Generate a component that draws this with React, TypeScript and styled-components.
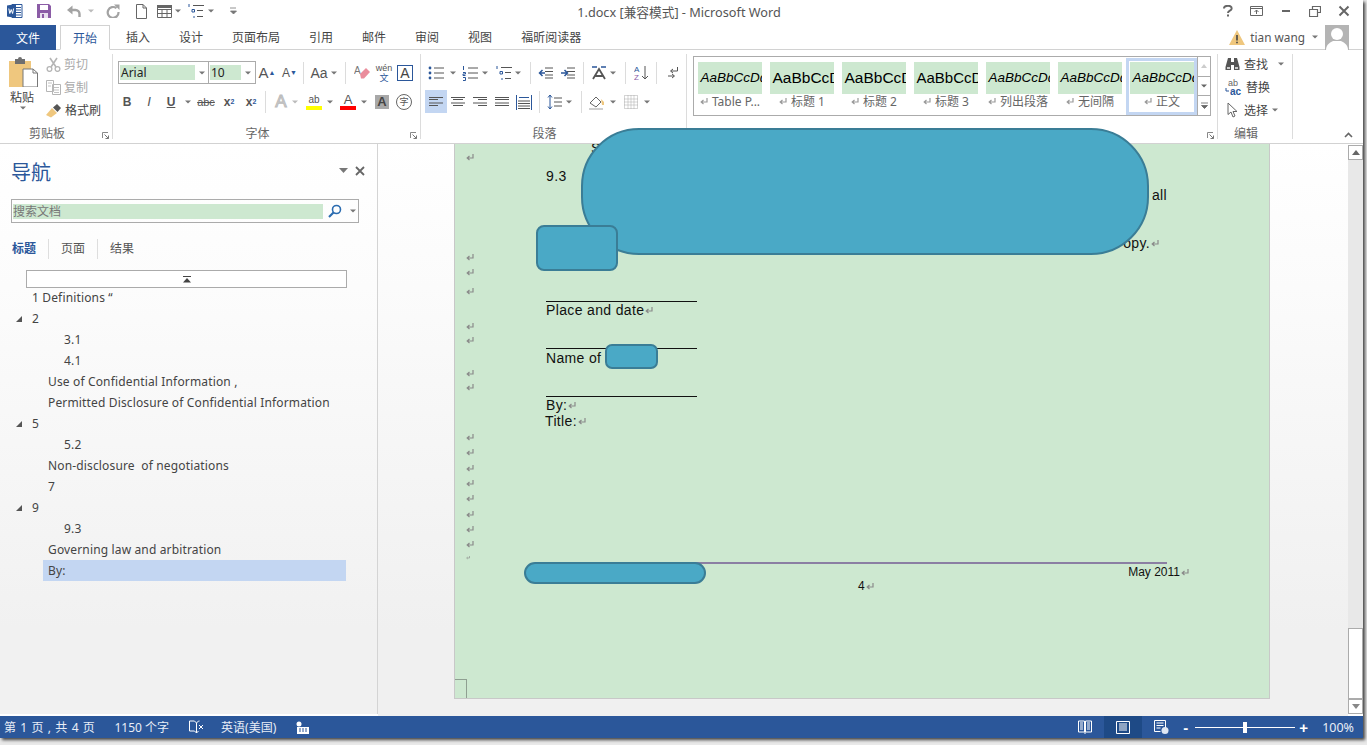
import React from 'react';
import styled, { createGlobalStyle } from 'styled-components';

const CJK = `"Noto Sans", "Noto Sans CJK SC", sans-serif`;

const GlobalStyle = createGlobalStyle`
  html, body {
    margin: 0;
    padding: 0;
    width: 1367px;
    height: 745px;
    overflow: hidden;
    background: #e9e9e9;
    font-family: ${CJK};
  }
`;

const Window = styled.div`
  position: relative;
  width: 1363px;
  height: 738px;
  display: flex;
  flex-direction: column;
  background: #fff;
  box-shadow: 2px 2px 3px #444;
  overflow: hidden;
`;

/* title bar */
const TitleBar = styled.header`
  height: 25px;
  box-sizing: border-box;
  padding-bottom: 3px;
  display: grid;
  grid-template-columns: 1fr auto 1fr;
  align-items: center;
`;

const Qat = styled.div`
  display: flex;
  align-items: center;
`;

const Slot = styled.span<{ $w: number }>`
  width: ${(p) => p.$w}px;
  flex: none;
  display: flex;
  align-items: center;
  justify-content: center;
`;

const Title = styled.div`
  font-size: 12.7px;
  color: #555;
  padding-right: 5px;
`;

const WindowButtons = styled.div`
  display: flex;
  justify-content: flex-end;
  align-items: center;
  padding-right: 4.5px;
`;

/* tabs */
const TabRow = styled.nav`
  height: 25px;
  box-sizing: border-box;
  display: flex;
  align-items: stretch;
  border-bottom: 1px solid #d2d2d2;
  font-size: 12px;
`;

const FileTab = styled.div`
  width: 56px;
  background: #2b579a;
  color: #fff;
  display: flex;
  align-items: center;
  justify-content: center;
  margin-right: 4px;
  margin-bottom: -1px;
`;

const Tab = styled.div<{ $active?: boolean }>`
  display: flex;
  align-items: center;
  padding: 0 14.5px;
  color: ${(p) => (p.$active ? '#2b579a' : '#444')};
  box-sizing: border-box;
  ${(p) =>
    p.$active &&
    `
    border: 1px solid #d2d2d2;
    border-bottom: 1px solid #fff;
    margin: 0 1.5px -1px 0;
    padding: 0 12px;
  `}
`;

const UserBox = styled.div`
  margin-left: auto;
  display: flex;
  align-items: center;
  font-size: 11.8px;
  color: #555;
  padding-right: 14px;
`;

const Avatar = styled.div`
  width: 24px;
  height: 25px;
  background: #b4b4b4;
  overflow: hidden;
`;

/* ribbon */
const Ribbon = styled.section`
  height: 94px;
  box-sizing: border-box;
  display: flex;
  border-bottom: 1px solid #d2d2d2;
  padding-top: 4px;
`;

const Group = styled.div<{ $w: number }>`
  position: relative;
  width: ${(p) => p.$w}px;
  flex: none;
  box-sizing: border-box;
  height: 85px;
  border-right: 1px solid #dcdcdc;
  display: flex;
  flex-direction: column;
`;

const GroupBody = styled.div`
  flex: 1;
  min-height: 0;
`;

const GroupLabel = styled.div`
  height: 14px;
  line-height: 14px;
  margin-bottom: -2px;
  padding-right: 18px;
  text-align: center;
  font-size: 12px;
  color: #666;
`;

const Launcher = styled.span`
  position: absolute;
  right: 3px;
  bottom: 0;
  display: flex;
`;

const ClipboardBody = styled(GroupBody)`
  display: flex;
`;

const PasteColumn = styled.div`
  width: 46px;
  display: flex;
  flex-direction: column;
  align-items: center;
  padding-top: 3px;
  font-size: 12px;
  color: #444;
  box-sizing: border-box;
`;

const PasteLabel = styled.div`
  margin-top: 2px;
  margin-left: -2px;
  line-height: 17px;
`;

const ClipColumn = styled.div`
  display: flex;
  flex-direction: column;
  gap: 5px;
  padding-top: 1px;
`;

const ClipRow = styled.div<{ $off?: boolean }>`
  display: flex;
  align-items: center;
  gap: 3px;
  height: 18px;
  font-size: 12px;
  color: ${(p) => (p.$off ? '#aaa' : '#444')};
`;

const ToolRows = styled(GroupBody)`
  display: flex;
  flex-direction: column;
  gap: 6px;
  padding-top: 7px;
  box-sizing: border-box;
`;

const ToolRow = styled.div<{ $pad: number }>`
  display: flex;
  align-items: center;
  height: 23px;
  padding-left: ${(p) => p.$pad}px;
`;

const Tool = styled.span<{ $w: number; $active?: boolean; $color?: string }>`
  width: ${(p) => p.$w}px;
  height: 23px;
  flex: none;
  display: flex;
  align-items: center;
  justify-content: center;
  background: ${(p) => (p.$active ? '#c3d6f2' : 'transparent')};
  color: ${(p) => p.$color || '#555'};
  font-size: 13px;
  font-family: 'Liberation Sans', sans-serif;
`;

const Divider = styled.span`
  width: 1px;
  height: 22px;
  background: #dcdcdc;
  flex: none;
`;

const Combo = styled.div<{ $w: number }>`
  width: ${(p) => p.$w}px;
  height: 23px;
  box-sizing: border-box;
  border: 1px solid #ababab;
  margin-right: -1px;
  display: flex;
  align-items: center;
  padding-left: 1px;
  flex: none;
`;

const ComboValue = styled.span<{ $w: number }>`
  width: ${(p) => p.$w}px;
  height: 15px;
  background: #cde8d0;
  font-size: 12px;
  line-height: 15px;
  color: #222;
  padding-left: 1px;
  box-sizing: border-box;
`;

const ComboArrow = styled.span`
  flex: 1;
  display: flex;
  justify-content: center;
`;

const GrowGlyph = styled(Tool)<{ $size: number }>`
  font-size: ${(p) => p.$size}px;
  & sup {
    font-size: 7px;
    color: #2b579a;
  }
`;

const BoxedLetter = styled.span`
  border: 1px solid #2b579a;
  width: 14px;
  height: 14px;
  font-size: 14px;
  display: flex;
  justify-content: center;
  align-items: center;
  color: #444;
`;

const PhoneticGlyph = styled(Tool)`
  font-size: 9px;
  flex-direction: column;
  line-height: 9px;
  & span {
    color: #2b579a;
    font-family: ${CJK};
  }
`;

const BoldGlyph = styled(Tool)<{ $underline?: boolean }>`
  font-weight: 700;
  font-size: 12px;
  text-decoration: ${(p) => (p.$underline ? 'underline' : 'none')};
  & sub,
  & sup {
    font-size: 7px;
    color: #2b579a;
  }
`;

const ItalicGlyph = styled(Tool)`
  font-style: italic;
`;

const StrikeGlyph = styled(Tool)`
  text-decoration: line-through;
  font-size: 11px;
`;

const EffectGlyph = styled(Tool)`
  font-size: 17px;
  -webkit-text-stroke: 1px #bbb;
`;

const ColorBar = styled.span<{ $color: string; $size: number }>`
  display: flex;
  flex-direction: column;
  align-items: center;
  line-height: 12px;
  font-size: ${(p) => p.$size}px;
  &::after {
    content: '';
    width: 16px;
    height: 4px;
    background: ${(p) => p.$color};
  }
`;

const ShadedLetter = styled.span`
  background: #a8a8a8;
  width: 14px;
  height: 14px;
  display: flex;
  justify-content: center;
  align-items: center;
  font-weight: 700;
  font-size: 13px;
  line-height: 14px;
  color: #444;
`;

const CircledLetter = styled.span`
  border: 1px solid #666;
  border-radius: 50%;
  width: 14px;
  height: 14px;
  display: flex;
  justify-content: center;
  align-items: center;
  font-size: 9px;
  font-family: ${CJK};
`;

/* style gallery */
const Gallery = styled.div`
  margin: 2px 0 0 6px;
  width: 518px;
  height: 60px;
  box-sizing: border-box;
  border: 1px solid #ababab;
  display: flex;
  padding-left: 4px;
`;

const StyleCard = styled.div<{ $selected?: boolean }>`
  width: ${(p) => (p.$selected ? '71px' : '64px')};
  height: ${(p) => (p.$selected ? '57px' : '52px')};
  flex: none;
  box-sizing: border-box;
  margin: ${(p) => (p.$selected ? '1px 0 0 -4px' : '5px 8px 0 0')};
  border: ${(p) => (p.$selected ? '3px solid #c3d6f2' : 'none')};
  display: flex;
  flex-direction: column;
  padding: ${(p) => (p.$selected ? '1px 0 0 1px' : '0')};
`;

const StylePreview = styled.div<{ $italic?: boolean; $size?: number }>`
  height: 32px;
  flex: none;
  background: #cde8d0;
  overflow: hidden;
  white-space: nowrap;
  font-family: 'Liberation Sans', sans-serif;
  font-style: ${(p) => (p.$italic ? 'italic' : 'normal')};
  font-size: ${(p) => p.$size ?? 13.5}px;
  line-height: 32px;
  color: #000;
  padding-left: 2.5px;
`;

const StyleName = styled.div`
  height: 15px;
  font-size: 12px;
  line-height: 15px;
  color: #666;
  display: flex;
  justify-content: center;
  align-items: center;
  gap: 4px;
  white-space: nowrap;
`;

const GalleryScroll = styled.div`
  margin-left: auto;
  width: 15px;
  display: flex;
  flex-direction: column;
  border-left: 1px solid #ababab;
`;

const GalleryButton = styled.span<{ $mid?: boolean }>`
  flex: 1;
  display: flex;
  align-items: center;
  justify-content: center;
  border-bottom: ${(p) => (p.$mid ? '1px solid #ababab' : 'none')};
  border-top: ${(p) => (p.$mid ? '1px solid #ababab' : 'none')};
`;

const EditRows = styled(GroupBody)`
  display: flex;
  flex-direction: column;
  gap: 5px;
  padding: 1px 0 0 7px;
`;

const EditRow = styled.div`
  height: 18px;
  display: flex;
  align-items: center;
  gap: 4px;
  font-size: 12px;
  color: #444;
`;

const CollapseButton = styled.span`
  margin-left: 51px;
  height: 84px;
  display: flex;
  align-items: flex-end;
`;

/* main */
const Main = styled.main`
  flex: 1;
  min-height: 0;
  display: flex;
`;

const NavPane = styled.aside`
  width: 378px;
  flex: none;
  box-sizing: border-box;
  border-right: 1px solid #d4d4d4;
  background: linear-gradient(#ffffff, #fcfcfc 25%, #f1f1f1 85%);
  padding: 13px 19px 0 11px;
  margin-bottom: 2px;
`;

const NavHead = styled.div`
  display: flex;
  align-items: center;
  height: 28px;
  font-size: 20px;
  color: #2b579a;
`;

const NavHeadButtons = styled.div`
  margin-left: auto;
  display: flex;
  align-items: center;
  gap: 7px;
  margin-right: -7px;
`;

const SearchBox = styled.div`
  margin-top: 14px;
  height: 24px;
  box-sizing: border-box;
  width: 348px;
  border: 1px solid #ababab;
  display: flex;
  align-items: center;
  padding-left: 1px;
`;

const SearchText = styled.span`
  width: 310px;
  height: 15px;
  background: #cde8d0;
  font-size: 12px;
  line-height: 15px;
  color: #777;
`;

const SearchIcons = styled.span`
  display: flex;
  align-items: center;
  margin-left: 5px;
  gap: 8px;
`;

const NavTabs = styled.div`
  display: flex;
  align-items: center;
  height: 20px;
  margin-top: 16px;
  font-size: 12px;
`;

const NavTab = styled.span<{ $active?: boolean; $first?: boolean }>`
  padding: ${(p) => (p.$first ? '0 12px 0 1px' : '0 12px')};
  height: 20px;
  line-height: 20px;
  box-sizing: border-box;
  color: ${(p) => (p.$active ? '#2b579a' : '#555')};
  font-weight: ${(p) => (p.$active ? 700 : 400)};
  & + & {
    border-left: 1px solid #dedede;
  }
`;

const TreeUp = styled.div`
  margin: 11px 0 0 15px;
  width: 321px;
  height: 18px;
  box-sizing: border-box;
  border: 1px solid #ababab;
  display: flex;
  align-items: center;
  justify-content: center;
  background: #fff;
`;

const Tree = styled.ul`
  list-style: none;
  margin: -1px 0 0 0;
  padding: 0;
`;

const TreeRow = styled.li<{ $indent: number; $selected?: boolean }>`
  position: relative;
  height: 21px;
  line-height: 21px;
  font-size: 12px;
  letter-spacing: 0.15px;
  color: #444;
  white-space: pre;
  margin-left: ${(p) => (p.$selected ? '32px' : '0')};
  width: ${(p) => (p.$selected ? '303px' : 'auto')};
  padding-left: ${(p) => (p.$selected ? 5 : p.$indent - 11)}px;
  background: ${(p) => (p.$selected ? '#c3d6f2' : 'transparent')};
  box-sizing: border-box;
`;

const TreeToggle = styled.span`
  position: absolute;
  left: 5px;
  top: 8px;
  display: flex;
`;

const DocArea = styled.div`
  flex: 1;
  min-width: 0;
  background: linear-gradient(#ffffff, #fbfbfb 25%, #f0f0f0 85%);
  padding: 0 77px 0 76px;
  display: flex;
`;

const Page = styled.article`
  position: relative;
  width: 816px;
  height: 555px;
  flex: none;
  box-sizing: border-box;
  background: #cde8d0;
  border: solid #c8c8c8;
  border-width: 0 1px 1px 1px;
  display: flex;
  overflow: hidden;
  font-family: 'Liberation Sans', sans-serif;
  font-size: 14px;
  letter-spacing: 0.35px;
  color: #111;
`;

const MarkColumn = styled.div`
  width: 91px;
  flex: none;
  padding-left: 11px;
  box-sizing: border-box;
  display: flex;
  flex-direction: column;
`;

const MarkSlot = styled.span<{ $gap: number; $small?: boolean }>`
  height: 10px;
  margin-top: ${(p) => p.$gap}px;
  display: flex;
  transform: ${(p) => (p.$small ? 'scale(0.5)' : 'none')};
  transform-origin: 0 50%;
`;

const BodyColumn = styled.div`
  flex: 1;
  min-width: 0;
  display: flex;
  flex-direction: column;
`;

const TextRow = styled.div<{ $top?: number; $left?: number; $right?: number }>`
  height: 16px;
  line-height: 16px;
  flex: none;
  display: flex;
  align-items: center;
  gap: 1px;
  margin-top: ${(p) => p.$top ?? 0}px;
  margin-left: ${(p) => p.$left ?? 0}px;
  justify-content: ${(p) => (p.$right ? 'flex-end' : 'flex-start')};
  padding-right: ${(p) => p.$right ?? 0}px;
  white-space: nowrap;
`;

const SignLine = styled.div<{ $top: number }>`
  width: 151px;
  height: 1px;
  flex: none;
  background: #111;
  margin-top: ${(p) => p.$top}px;
`;

const FooterLine = styled.div`
  width: 478px;
  height: 2px;
  flex: none;
  margin: 133px 0 0 143px;
  background: #8b7fa3;
`;

const FooterText = styled(TextRow)`
  font-size: 12px;
  letter-spacing: 0;
`;

const PageCorner = styled.span`
  position: absolute;
  left: 0;
  bottom: 0;
  width: 11px;
  height: 18px;
  border: solid #8f9f91;
  border-width: 1px 1px 0 0;
`;

const Scrollbar = styled.div`
  width: 15px;
  flex: none;
  margin-bottom: 2px;
  display: flex;
  flex-direction: column;
  background: #e8e8e8;
  margin-top: 1px;
`;

const ScrollButton = styled.span`
  height: 15px;
  flex: none;
  box-sizing: border-box;
  border: 1px solid #ababab;
  background: #fff;
  display: flex;
  align-items: center;
  justify-content: center;
`;

const ScrollTrack = styled.div`
  flex: 1;
  display: flex;
  flex-direction: column;
  justify-content: flex-end;
`;

const ScrollThumb = styled.div`
  height: 71px;
  box-sizing: border-box;
  border: 1px solid #ababab;
  background: #fff;
`;

/* status */
const StatusBar = styled.footer`
  height: 22px;
  flex: none;
  background: #2b579a;
  color: #e8eef7;
  font-size: 12px;
  display: flex;
  align-items: center;
  padding-left: 4px;
  position: relative;
`;

const StatusItem = styled.span<{ $left?: number; $size?: number; $spacing?: number }>`
  margin-left: ${(p) => p.$left ?? 0}px;
  font-size: ${(p) => p.$size ?? 12}px;
  letter-spacing: ${(p) => p.$spacing ?? 0}px;
  display: flex;
  align-items: center;
  white-space: pre;
`;

const StatusRight = styled.div`
  margin-left: auto;
  display: flex;
  align-items: center;
  height: 22px;
  padding-right: 9px;
`;

const ViewButton = styled.span<{ $active?: boolean }>`
  width: 38px;
  height: 22px;
  display: flex;
  align-items: center;
  justify-content: center;
  background: ${(p) => (p.$active ? '#1e4a86' : 'transparent')};
`;

const ZoomTrack = styled.span`
  position: relative;
  width: 100px;
  height: 1px;
  background: #fff;
  margin: 0 4px 0 5px;
`;

const ZoomThumb = styled.span`
  position: absolute;
  left: 48px;
  top: -5px;
  width: 4px;
  height: 11px;
  background: #fff;
`;

const ZoomSign = styled.span`
  font-family: 'Liberation Sans', sans-serif;
  font-size: 15px;
  font-weight: 700;
  color: #fff;
  width: 9px;
  text-align: center;
  line-height: 15px;
`;

const Redaction = styled.div<{ $x: number; $y: number; $w: number; $h: number; $r: number }>`
  position: absolute;
  left: ${(p) => p.$x}px;
  top: ${(p) => p.$y}px;
  width: ${(p) => p.$w}px;
  height: ${(p) => p.$h}px;
  border-radius: ${(p) => p.$r}px;
  box-sizing: border-box;
  background: #4aa9c6;
  border: 2px solid #3a7d96;
`;

/* small drawings */
const Svg: React.FC<{ w?: number; h?: number; children: React.ReactNode }> = ({ w = 16, h = 16, children }) => (
  <svg width={w} height={h} viewBox={`0 0 ${w} ${h}`} style={{ display: 'block', flex: 'none' }}>
    {children}
  </svg>
);

const Caret: React.FC<{ color?: string }> = ({ color }) => (
  <Svg w={6} h={4}>
    <path d="M0 0.5h6L3 3.5z" fill={color || '#777'} />
  </Svg>
);

const ReturnMark: React.FC<{ color?: string }> = ({ color = '#8a8a8a' }) => (
  <Svg w={8} h={9}>
    <path d="M7 1v4H2M3.5 3L1.2 5l2.3 2" fill="none" stroke={color} strokeWidth="1.2" />
  </Svg>
);

const LinesIcon: React.FC<{ align: 'left' | 'center' | 'right' | 'full' }> = ({ align }) => {
  const short = { left: 'M1 6h9M1 12h9', center: 'M3 6h10M3 12h10', right: 'M6 6h9M6 12h9', full: 'M1 6h14M1 12h14' }[align];
  return (
    <Svg>
      <path d="M1 3.5h14M1 9h14" stroke="#555" fill="none" />
      <path d={short} stroke="#555" fill="none" transform="translate(0 -.5)" />
    </Svg>
  );
};

const ListIcon: React.FC<{ kind: 'bullet' | 'number' | 'multi' }> = ({ kind }) => (
  <Svg>
    {kind === 'bullet' && (
      <>
        <circle cx="2" cy="3" r="1.4" fill="#2b579a" />
        <circle cx="2" cy="8" r="1.4" fill="#2b579a" />
        <circle cx="2" cy="13" r="1.4" fill="#2b579a" />
      </>
    )}
    {kind === 'number' && <path d="M1.5 1v4M1 7.5h2.5v1.5H1v1.5h2.5M1 12.5h2.5v3H1" stroke="#2b579a" fill="none" />}
    {kind === 'multi' && <path d="M1 1v3M4 6.5h2.5v2.5H4zM6 13v2" stroke="#2b579a" fill="none" />}
    {kind === 'multi' ? (
      <path d="M5 2.5h11M9 7.5h6M9 13.5h6" stroke="#555" fill="none" />
    ) : (
      <path d="M6 3h10M6 8h10M6 13h10" stroke="#555" fill="none" />
    )}
  </Svg>
);

const WordLogo = () => (
  <Svg>
    <path d="M5 1.5h10v13H5z" fill="#fff" stroke="#2b579a" />
    <path d="M9 4.5h5M9 7h5M9 9.5h5M9 12h5" stroke="#2b579a" />
    <path d="M0 2.5l9-1.5v14l-9-1.5z" fill="#2b579a" />
    <path d="M1.8 5.5l1 5 1.4-4 1.4 4 1-5" fill="none" stroke="#fff" strokeWidth="1" />
  </Svg>
);

const SaveIcon = () => (
  <Svg w={14} h={14}>
    <path d="M0 0h12l2 2v12H0z" fill="#8b5ca6" />
    <path d="M3 1h8v5H3z" fill="#fff" />
    <path d="M3 9h8v5H3z" fill="#e8e0ee" />
    <path d="M5 10h2v4H5z" fill="#8b5ca6" />
  </Svg>
);

const UndoIcon = () => (
  <Svg w={15} h={14}>
    <path d="M3 6h6.5a4 4 0 0 1 4 4v3" fill="none" stroke="#a3a3a3" strokeWidth="2.4" />
    <path d="M6.5 1.5L1 6l5.5 4.5z" fill="#a3a3a3" />
  </Svg>
);

const RedoIcon = () => (
  <Svg w={14} h={14}>
    <path d="M10.5 4.2A5.4 5.4 0 1 0 12.5 8" fill="none" stroke="#a3a3a3" strokeWidth="2.2" />
    <path d="M8 0.5h5.5V6z" fill="#a3a3a3" />
  </Svg>
);

const NewDocIcon = () => (
  <Svg w={11} h={15}>
    <path d="M.5.5h6.5l3.5 3.5v10.500H.5zM7 .5V4h3.500" fill="#fff" stroke="#666" />
  </Svg>
);

const TableIcon = () => (
  <Svg w={15} h={13}>
    <path d="M.5 .5h14v12H.5zM.5 4.500h14M.5 8.500h14M5 4.500v8M10 4.500v8" fill="none" stroke="#666" />
    <path d="M0 0h15v3H0z" fill="#666" />
  </Svg>
);

const PasteIcon = () => (
  <Svg w={29} h={30}>
    <path d="M0 4h22v26H0z" fill="#efc77e" />
    <path d="M6 2h3a2 2 0 0 1 4 0h3v5H6z" fill="#6f6f6f" />
    <path d="M14 12h10l4.500 4v14H14z" fill="#fff" stroke="#777" />
    <path d="M24 12v4h4.500" fill="none" stroke="#777" />
  </Svg>
);

const ScissorsIcon = () => (
  <Svg w={15} h={15}>
    <circle cx="3.5" cy="12" r="2.4" fill="none" stroke="#b5b5b5" strokeWidth="1.3" />
    <circle cx="11.5" cy="12" r="2.4" fill="none" stroke="#b5b5b5" strokeWidth="1.3" />
    <path d="M5 10L11 1M10 10L4 1" stroke="#b5b5b5" strokeWidth="1.6" />
  </Svg>
);

const CopyIcon = () => (
  <Svg w={15} h={15}>
    <path d="M.5.5h7v11h-7zM6.500 4.500h8v10h-8z" fill="#fff" stroke="#b5b5b5" />
    <path d="M2 3h4M2 6h3M8 7.500h5M8 10h5M8 12.500h5" stroke="#c2c2c2" />
  </Svg>
);

const BrushIcon = () => (
  <Svg w={16} h={15}>
    <path d="M0 12L6 5l5 5-6 4.500z" fill="#efc77e" />
    <path d="M7 4.500l4-3.500 4 4-3.500 4z" fill="#555" />
  </Svg>
);

const BinocularsIcon = () => (
  <Svg w={15} h={14}>
    <path d="M3 1h3v4h3V1h3l2.500 9v3H9V8H6v5H.5v-3z" fill="#555" />
    <path d="M2 10h3v2H2zM10 10h3v2h-3z" fill="#ccc" />
  </Svg>
);

const ReplaceIcon = () => (
  <Svg w={17} h={18}>
    <text x="3" y="8" fontSize="9" fontFamily="Liberation Sans" fill="#666">ab</text>
    <text x="5" y="17" fontSize="10" fontFamily="Liberation Sans" fill="#2b579a" fontWeight="700">ac</text>
    <path d="M1 10v3h3" fill="none" stroke="#2b579a" />
  </Svg>
);

const CursorIcon = () => (
  <Svg w={11} h={16}>
    <path d="M1 1v11.500l3-2.500 2 5 2-1-2-4.500h4z" fill="#fff" stroke="#666" />
  </Svg>
);

const WarnIcon = () => (
  <Svg w={16} h={15}>
    <path d="M8 0l8 15H0z" fill="#efc77e" />
    <path d="M7.200 5h1.600v5.500H7.200zM7.200 11.700h1.600v1.600H7.200z" fill="#444" />
  </Svg>
);

const PersonIcon = () => (
  <Svg w={24} h={25}>
    <circle cx="12" cy="9" r="6" fill="#fff" />
    <path d="M1 25c0-6 5-8 7-9h8c2 1 7 3 7 9z" fill="#fff" />
  </Svg>
);

const SearchGlass = () => (
  <Svg w={14} h={14}>
    <circle cx="8.500" cy="5.500" r="4" fill="none" stroke="#2b6cb0" strokeWidth="1.600" />
    <path d="M5.500 8.500L1 13" stroke="#2b6cb0" strokeWidth="2.200" />
  </Svg>
);

const LauncherIcon = () => (
  <Launcher>
    <Svg w={7} h={7}>
      <path d="M.5 6V.5H6" fill="none" stroke="#888" />
      <path d="M2.500 2.500L6.500 6.500M6.500 3.500v3h-3" fill="none" stroke="#777" />
    </Svg>
  </Launcher>
);

const styleCards = [
  { name: 'Table P...', italic: true },
  { name: '标题 1', size: 15.5 },
  { name: '标题 2', size: 15.5 },
  { name: '标题 3', size: 15 },
  { name: '列出段落', italic: true },
  { name: '无间隔', italic: true },
];

const tree = [
  { t: '1 Definitions “', i: 32 },
  { t: '2', i: 32, open: true },
  { t: '3.1', i: 64 },
  { t: '4.1', i: 64 },
  { t: 'Use of Confidential Information ,', i: 48 },
  { t: 'Permitted Disclosure of Confidential Information', i: 48 },
  { t: '5', i: 32, open: true },
  { t: '5.2', i: 64 },
  { t: 'Non-disclosure  of negotiations', i: 48 },
  { t: '7', i: 48 },
  { t: '9', i: 32, open: true },
  { t: '9.3', i: 64 },
  { t: 'Governing law and arbitration', i: 48 },
  { t: 'By:', i: 48, selected: true },
];

const markGaps = [9, 90, 5, 9, 25, 4, 23, 4, 40, 5, 6, 5, 5, 6, 5, 5, 3];

const App: React.FC = () => (
  <>
    <GlobalStyle />
    <Window>
      <TitleBar>
        <Qat>
          <Slot $w={7} />
          <WordLogo />
          <Slot $w={14} />
          <SaveIcon />
          <Slot $w={15} />
          <UndoIcon />
          <Slot $w={20}><Caret color="#bbb" /></Slot>
          <Slot $w={5} />
          <RedoIcon />
          <Slot $w={16} />
          <NewDocIcon />
          <Slot $w={10} />
          <TableIcon />
          <Slot $w={12}><Caret /></Slot>
          <Slot $w={4} />
          <ListIcon kind="multi" />
          <Slot $w={14}><Caret /></Slot>
          <Slot $w={12} />
          <Svg w={7} h={8}>
            <path d="M0 1h6M.5 4h6l-3 3z" stroke="#777" fill="#777" strokeWidth=".8" />
          </Svg>
        </Qat>
        <Title>1.docx [兼容模式] - Microsoft Word</Title>
        <WindowButtons>
          <Slot $w={29}>
            <Svg w={10} h={12}>
              <path d="M1 3.500C1 1 3 .8 5 .8s4 1 3.500 3.200C8 5.800 5 5.500 5 8M5 9.500V11.500" fill="none" stroke="#666" strokeWidth="2" />
            </Svg>
          </Slot>
          <Slot $w={29}>
            <Svg w={14} h={11}>
              <path d="M.5 .5h12v9H.5zM.5 2.500h12M6.500 8V4M4.500 6l2-2 2 2" fill="none" stroke="#666" />
            </Svg>
          </Slot>
          <Slot $w={29}>
            <Svg w={12} h={4}><path d="M2 1h8v2H2z" fill="#666" /></Svg>
          </Slot>
          <Slot $w={29}>
            <Svg w={12} h={11}>
              <path d="M.5 3.500h8v7h-8zM3.500 3.500v-3h8v6h-3" fill="none" stroke="#666" strokeWidth="1.200" />
            </Svg>
          </Slot>
          <Slot $w={29}>
            <Svg w={12} h={12}>
              <path d="M1.500 1.500l9 9M10.500 1.500l-9 9" stroke="#666" strokeWidth="2" />
            </Svg>
          </Slot>
        </WindowButtons>
      </TitleBar>

      <TabRow>
        <FileTab>文件</FileTab>
        <Tab $active>开始</Tab>
        <Tab>插入</Tab>
        <Tab>设计</Tab>
        <Tab>页面布局</Tab>
        <Tab>引用</Tab>
        <Tab>邮件</Tab>
        <Tab>审阅</Tab>
        <Tab>视图</Tab>
        <Tab>福昕阅读器</Tab>
        <UserBox>
          <WarnIcon />
          <Slot $w={5} />
          tian wang
          <Slot $w={20}><Caret /></Slot>
          <Avatar><PersonIcon /></Avatar>
        </UserBox>
      </TabRow>

      <Ribbon>
        <Group $w={113}>
          <ClipboardBody>
            <PasteColumn>
              <PasteIcon />
              <PasteLabel>粘贴</PasteLabel>
              <Slot $w={12}><Caret /></Slot>
            </PasteColumn>
            <ClipColumn>
              <ClipRow $off><ScissorsIcon />剪切</ClipRow>
              <ClipRow $off><CopyIcon />复制</ClipRow>
              <ClipRow><BrushIcon />格式刷</ClipRow>
            </ClipColumn>
          </ClipboardBody>
          <GroupLabel>剪贴板</GroupLabel>
          <LauncherIcon />
        </Group>

        <Group $w={308}>
          <ToolRows>
            <ToolRow $pad={5}>
              <Combo $w={91}>
                <ComboValue $w={75}>Arial</ComboValue>
                <ComboArrow><Caret /></ComboArrow>
              </Combo>
              <Combo $w={48}>
                <ComboValue $w={31}>10</ComboValue>
                <ComboArrow><Caret /></ComboArrow>
              </Combo>
              <GrowGlyph $w={24} $size={15}>A<sup>▲</sup></GrowGlyph>
              <GrowGlyph $w={21} $size={12}>A<sup>▼</sup></GrowGlyph>
              <Slot $w={3} />
              <Divider />
              <Slot $w={3} />
              <GrowGlyph $w={24} $size={14}>Aa</GrowGlyph>
              <Slot $w={6}><Caret /></Slot>
              <Slot $w={8} />
              <Divider />
              <Slot $w={5} />
              <Tool $w={22}>
                <Svg w={16} h={15}>
                  <text x="0" y="9" fontSize="10" fontFamily="Liberation Sans" fill="#777">A</text>
                  <path d="M6 9l6-6 4 4-6 6.500H7z" fill="#ea8d9c" />
                </Svg>
              </Tool>
              <PhoneticGlyph $w={22}>
                wén
                <span>文</span>
              </PhoneticGlyph>
              <Tool $w={20}><BoxedLetter>A</BoxedLetter></Tool>
            </ToolRow>
            <ToolRow $pad={3}>
              <BoldGlyph $w={22}>B</BoldGlyph>
              <ItalicGlyph $w={22}>I</ItalicGlyph>
              <BoldGlyph $w={22} $underline>U</BoldGlyph>
              <Slot $w={12}><Caret /></Slot>
              <StrikeGlyph $w={24}>abc</StrikeGlyph>
              <BoldGlyph $w={22}>x<sub>2</sub></BoldGlyph>
              <BoldGlyph $w={22}>x<sup>2</sup></BoldGlyph>
              <Slot $w={3} />
              <Divider />
              <Slot $w={3} />
              <EffectGlyph $w={24} $color="#ddd">A</EffectGlyph>
              <Slot $w={4}><Caret color="#bbb" /></Slot>
              <Slot $w={5} />
              <Tool $w={24}>
                <ColorBar $color="#ffff00" $size={10}>ab</ColorBar>
              </Tool>
              <Slot $w={8}><Caret /></Slot>
              <Slot $w={2} />
              <Tool $w={24}>
                <ColorBar $color="#ff0000" $size={13}>A</ColorBar>
              </Tool>
              <Slot $w={8}><Caret /></Slot>
              <Slot $w={4} />
              <Tool $w={20}><ShadedLetter>A</ShadedLetter></Tool>
              <Slot $w={2} />
              <Tool $w={20}><CircledLetter>字</CircledLetter></Tool>
            </ToolRow>
          </ToolRows>
          <GroupLabel>字体</GroupLabel>
          <LauncherIcon />
        </Group>

        <Group $w={266}>
          <ToolRows>
            <ToolRow $pad={5}>
              <Tool $w={20}><ListIcon kind="bullet" /></Tool>
              <Slot $w={14}><Caret /></Slot>
              <Tool $w={20}><ListIcon kind="number" /></Tool>
              <Slot $w={10}><Caret /></Slot>
              <Slot $w={4} />
              <Tool $w={20}><ListIcon kind="multi" /></Tool>
              <Slot $w={8}><Caret /></Slot>
              <Slot $w={8} />
              <Divider />
              <Slot $w={4} />
              <Tool $w={22}>
                <Svg>
                  <path d="M7 3h8M7 6.500h8M7 10h8M7 13h8" stroke="#555" />
                  <path d="M7 8H2M4.500 5L1.500 8l3 3" fill="none" stroke="#2b579a" strokeWidth="1.500" />
                </Svg>
              </Tool>
              <Tool $w={22}>
                <Svg>
                  <path d="M7 3h8M7 6.500h8M7 10h8M7 13h8" stroke="#555" />
                  <path d="M1 8h6M4.500 5l3 3-3 3" fill="none" stroke="#2b579a" strokeWidth="1.500" />
                </Svg>
              </Tool>
              <Slot $w={4} />
              <Divider />
              <Slot $w={4} />
              <Tool $w={22}>
                <Svg w={18} h={15}>
                  <path d="M2 2h5M11 2h5" stroke="#2b579a" strokeWidth="1.500" />
                  <path d="M3 14L9 4l6 10M5.500 11h7" fill="none" stroke="#555" strokeWidth="1.800" />
                </Svg>
              </Tool>
              <Slot $w={6}><Caret /></Slot>
              <Slot $w={9} />
              <Divider />
              <Slot $w={5} />
              <Tool $w={22}>
                <Svg>
                  <text x="0" y="7" fontSize="8" fontFamily="Liberation Sans" fill="#2b579a">A</text>
                  <text x="0" y="15" fontSize="8" fontFamily="Liberation Sans" fill="#8b5ca6">Z</text>
                  <path d="M11 1v13M8 11l3 3 3-3" fill="none" stroke="#555" />
                </Svg>
              </Tool>
              <Slot $w={3} />
              <Divider />
              <Slot $w={5} />
              <Tool $w={22}><Svg w={12} h={14}><path d="M10.500 1v4H4M6 3L3.500 5 6 7M1 10h6M5 8l2.500 2L5 12" fill="none" stroke="#555" /></Svg></Tool>
            </ToolRow>
            <ToolRow $pad={4}>
              <Tool $w={22} $active><LinesIcon align="left" /></Tool>
              <Tool $w={22}><LinesIcon align="center" /></Tool>
              <Tool $w={22}><LinesIcon align="right" /></Tool>
              <Tool $w={22}><LinesIcon align="full" /></Tool>
              <Tool $w={22}>
                <Svg>
                  <path d="M2 7h12M2 9.500h12M2 12h12M2 14.500h12" stroke="#555" />
                  <path d="M.5 1v15M15.500 1v15M3 3.500h10" stroke="#2b579a" />
                </Svg>
              </Tool>
              <Slot $w={4} />
              <Divider />
              <Slot $w={5} />
              <Tool $w={20}>
                <Svg>
                  <path d="M3 1v14M1 3.500L3 1l2 2.500M1 12.500L3 15l2-2.500" fill="none" stroke="#2b579a" />
                  <path d="M7 4h8M7 8h8M7 12h8" stroke="#555" />
                </Svg>
              </Tool>
              <Slot $w={8}><Caret /></Slot>
              <Slot $w={8} />
              <Divider />
              <Slot $w={5} />
              <Tool $w={20}>
                <Svg>
                  <path d="M1 9l6-6 5 5-5 5z" fill="none" stroke="#666" />
                  <path d="M12 5l3 3v3h-2z" fill="#efc77e" />
                  <path d="M0 14h14v2H0z" fill="#cfcfcf" />
                </Svg>
              </Tool>
              <Slot $w={12}><Caret /></Slot>
              <Tool $w={24}><Svg w={14} h={14}><path d="M.5 .5h13v13H.5zM7 .5v13M.5 7h13M.5 4h13M.5 10h13M4 .5v13M10 .5v13" fill="none" stroke="#aaa" strokeDasharray="1 1" /></Svg></Tool>
              <Slot $w={8}><Caret /></Slot>
            </ToolRow>
          </ToolRows>
          <GroupLabel>段落</GroupLabel>
        </Group>

        <Group $w={531}>
          <Gallery>
            {styleCards.map((c) => (
              <StyleCard key={c.name}>
                <StylePreview $italic={c.italic} $size={c.size}>AaBbCcDd</StylePreview>
                <StyleName><ReturnMark color="#999" />{c.name}</StyleName>
              </StyleCard>
            ))}
            <StyleCard $selected>
              <StylePreview $italic>AaBbCcDd</StylePreview>
              <StyleName><ReturnMark color="#999" />正文</StyleName>
            </StyleCard>
            <GalleryScroll>
              <GalleryButton><Svg w={7} h={5}><path d="M0 4h6L3 0z" fill="#ccc" /></Svg></GalleryButton>
              <GalleryButton $mid><Caret color="#666" /></GalleryButton>
              <GalleryButton><Svg w={7} h={7}><path d="M0 1h7M.5 3.500h6L3.500 6.500z" stroke="#666" fill="#666" strokeWidth=".8" /></Svg></GalleryButton>
            </GalleryScroll>
          </Gallery>
          <LauncherIcon />
        </Group>

        <Group $w={75}>
          <EditRows>
            <EditRow><BinocularsIcon />查找<Slot $w={18}><Caret /></Slot></EditRow>
            <EditRow><ReplaceIcon />替换</EditRow>
            <EditRow><Slot $w={15}><CursorIcon /></Slot>选择<Caret /></EditRow>
          </EditRows>
          <GroupLabel>编辑</GroupLabel>
        </Group>

        <CollapseButton>
          <Svg w={9} h={6}><path d="M1 5l3.500-3.500L8 5" fill="none" stroke="#666" strokeWidth="1.600" /></Svg>
        </CollapseButton>
      </Ribbon>

      <Main>
        <NavPane>
          <NavHead>
            导航
            <NavHeadButtons>
              <Svg w={9} h={6}><path d="M0 0h9L4.500 5z" fill="#777" /></Svg>
              <Svg w={10} h={10}><path d="M1 1l8 8M9 1L1 9" stroke="#666" strokeWidth="1.800" /></Svg>
            </NavHeadButtons>
          </NavHead>
          <SearchBox>
            <SearchText>搜索文档</SearchText>
            <SearchIcons>
              <SearchGlass />
              <Caret />
            </SearchIcons>
          </SearchBox>
          <NavTabs>
            <NavTab $active $first>标题</NavTab>
            <NavTab>页面</NavTab>
            <NavTab>结果</NavTab>
          </NavTabs>
          <TreeUp>
            <Svg w={8} h={7}><path d="M0 .5h8" stroke="#444" /><path d="M0 6.500h8L4 2z" fill="#444" /></Svg>
          </TreeUp>
          <Tree>
            {tree.map((r, i) => (
              <TreeRow key={i} $indent={r.i} $selected={r.selected}>
                {r.open && (
                  <TreeToggle>
                    <Svg w={6} h={6}><path d="M6 0v6H0z" fill="#555" /></Svg>
                  </TreeToggle>
                )}
                {r.t}
              </TreeRow>
            ))}
          </Tree>
        </NavPane>

        <DocArea>
          <Page>
            <MarkColumn>
              {markGaps.map((g, i) => (
                <MarkSlot key={i} $gap={g} $small={i === markGaps.length - 1}><ReturnMark /></MarkSlot>
              ))}
            </MarkColumn>
            <BodyColumn>
              <TextRow $top={-4} $left={45}>S</TextRow>
              <TextRow $top={12}>9.3</TextRow>
              <TextRow $top={3} $right={102}>all</TextRow>
              <TextRow $top={32} $right={110}>opy.<ReturnMark /></TextRow>
              <SignLine $top={50} />
              <TextRow>Place and date<ReturnMark /></TextRow>
              <SignLine $top={30} />
              <TextRow $top={1}>Name of</TextRow>
              <SignLine $top={30} />
              <TextRow>By:<ReturnMark /></TextRow>
              <TextRow $left={-1}>Title:<ReturnMark /></TextRow>
              <FooterLine />
              <FooterText $right={80}>May 2011<ReturnMark /></FooterText>
              <FooterText $left={312} $top={-2}>4<ReturnMark /></FooterText>
            </BodyColumn>
            <PageCorner />
          </Page>
        </DocArea>

        <Scrollbar>
          <ScrollButton><Svg w={8} h={5}><path d="M0 5h8L4 0z" fill="#666" /></Svg></ScrollButton>
          <ScrollTrack><ScrollThumb /></ScrollTrack>
          <ScrollButton><Svg w={8} h={5}><path d="M0 0h8L4 5z" fill="#888" /></Svg></ScrollButton>
        </Scrollbar>
      </Main>

      <StatusBar>
        <StatusItem $spacing={0.6}>第 1 页 , 共 4 页</StatusItem>
        <StatusItem $left={19}>1150 个字</StatusItem>
        <StatusItem $left={20}>
          <Svg w={15} h={14}>
            <path d="M.5 1h5l2 2v10l-2-2h-5zM7.500 3l2-2h1M7.500 13l2-2" fill="none" stroke="#fff" />
            <path d="M10 5l4 4M14 5l-4 4" stroke="#fff" />
          </Svg>
        </StatusItem>
        <StatusItem $left={17}>英语(美国)</StatusItem>
        <StatusItem $left={20}>
          <Svg w={14} h={13}>
            <circle cx="3" cy="3" r="2.500" fill="#fff" />
            <path d="M1 6h12v7H1z" fill="#fff" />
            <path d="M3 8h8M3 10h8" stroke="#2b579a" strokeDasharray="2 1" />
          </Svg>
        </StatusItem>
        <StatusRight>
          <ViewButton>
            <Svg w={14} h={14}>
              <path d="M.5 1h6v11h-6zM7.500 1h6v11h-6zM2 3h3M2 5h3M2 7h3M2 9h3M9 3h3M9 5h3M9 7h3M9 9h3M7 12v2" fill="none" stroke="#fff" />
            </Svg>
          </ViewButton>
          <ViewButton $active>
            <Svg w={14} h={13}>
              <path d="M.5 .5h13v12H.5zM3 3h8M3 5h8M3 7h8M3 9h8" fill="none" stroke="#fff" />
            </Svg>
          </ViewButton>
          <ViewButton>
            <Svg w={15} h={14}>
              <path d="M.5 .5h11v8M.5 .5v11h6M2.500 3h7M2.500 5.500h7M2.500 8h4" fill="none" stroke="#fff" />
              <circle cx="11" cy="10.500" r="3.500" fill="#dfe7f3" />
            </Svg>
          </ViewButton>
          <Slot $w={1} />
          <ZoomSign>-</ZoomSign>
          <ZoomTrack><ZoomThumb /></ZoomTrack>
          <ZoomSign>+</ZoomSign>
          <StatusItem $left={14} $size={12.5}>100%</StatusItem>
        </StatusRight>
      </StatusBar>

      <Redaction $x={581} $y={128} $w={568} $h={127} $r={58} />
      <Redaction $x={536} $y={225} $w={82} $h={46} $r={8} />
      <Redaction $x={605} $y={344} $w={53} $h={25} $r={7} />
      <Redaction $x={524} $y={562} $w={182} $h={22} $r={11} />
    </Window>
  </>
);

export default App;
